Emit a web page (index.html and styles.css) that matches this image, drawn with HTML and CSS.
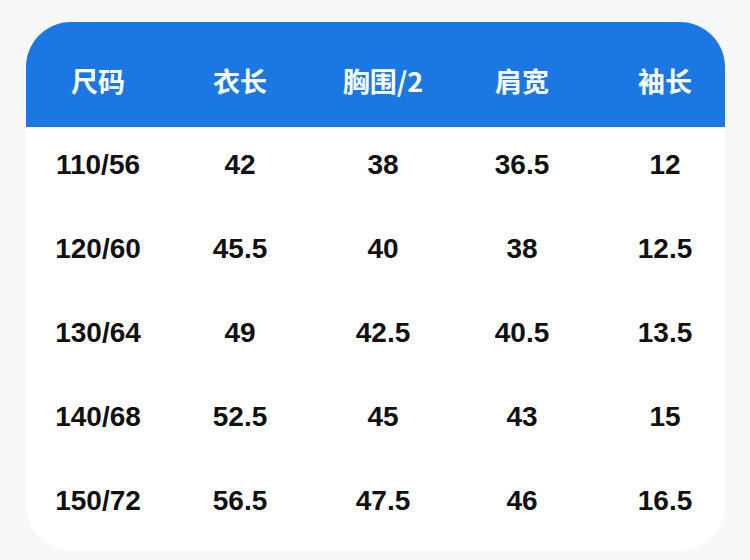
FILE: index.html
```html
<!DOCTYPE html>
<html lang="zh">
<head>
<meta charset="utf-8">
<link rel="stylesheet" href="styles.css">
</head>
<body>
<div class="card">
  <div class="row head">
    <div>尺码</div><div>衣长</div><div>胸围/2</div><div>肩宽</div><div>袖长</div>
  </div>
  <div class="row"><div>110/56</div><div>42</div><div>38</div><div>36.5</div><div>12</div></div>
  <div class="row"><div>120/60</div><div>45.5</div><div>40</div><div>38</div><div>12.5</div></div>
  <div class="row"><div>130/64</div><div>49</div><div>42.5</div><div>40.5</div><div>13.5</div></div>
  <div class="row"><div>140/68</div><div>52.5</div><div>45</div><div>43</div><div>15</div></div>
  <div class="row"><div>150/72</div><div>56.5</div><div>47.5</div><div>46</div><div>16.5</div></div>
</div>
</body>
</html>
```

FILE: styles.css
```css
html, body {
  margin: 0;
  padding: 0;
  background: #f8f8f8;
}
body {
  width: 750px;
  height: 560px;
  padding: 22px 0 0 26px;
  box-sizing: border-box;
  font-family: "Liberation Sans", "Noto Sans CJK SC", sans-serif;
}
.card {
  width: 699px;
  height: 528px;
  background: #ffffff;
  border-radius: 45px;
  overflow: hidden;
}
.row {
  display: grid;
  grid-template-columns: 142px 142px 144px 134px 152px;
  height: 84px;
  padding: 0 0 8px 1px;
  box-sizing: border-box;
  align-items: center;
  justify-items: center;
  font-size: 28px;
  font-weight: bold;
  line-height: 1;
  color: #111111;
}
.row.head {
  height: 105px;
  padding: 12px 0 0 1px;
  background: #1b78e2;
  color: #ffffff;
  font-size: 27px;
  font-family: "Noto Sans CJK SC", "Liberation Sans", sans-serif;
}
```
